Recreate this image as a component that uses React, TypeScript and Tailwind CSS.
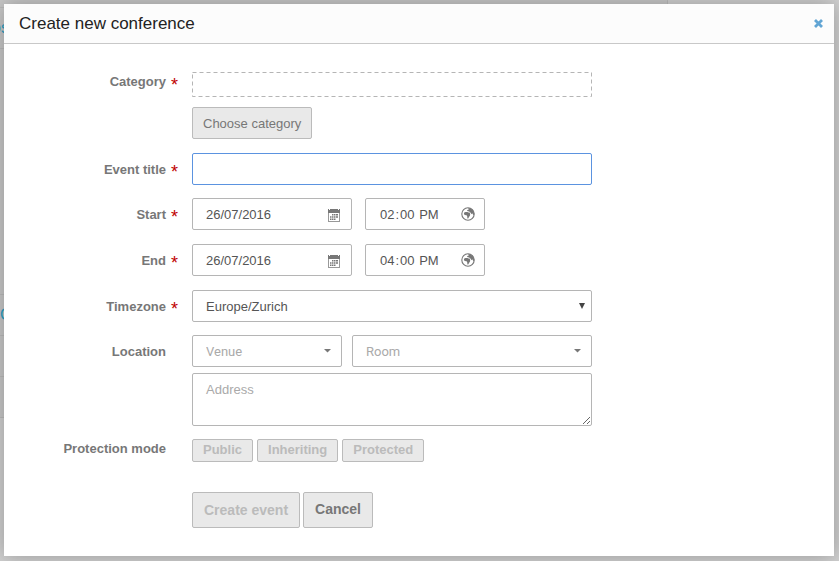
import { useState } from "react";
import type { ReactNode } from "react";

const field =
  "h-8 w-full rounded-xs border border-[#b5b5b5] bg-white px-[13px] text-[13px] text-[#555] outline-none";
const button =
  "rounded-xs border border-[#bbb] bg-[#e9e9e9] text-[#777] disabled:text-[#bbb]";

function CalendarIcon() {
  return (
    <svg width="12" height="13" viewBox="0 0 12 13" fill="#777" aria-hidden="true">
      <path d="M0 0h1v1h1V0h8v1h1V0h1v4H0z" />
      <path d="M0 4h1v8h10V4h1v9H0z" fillOpacity="0.75" />
      <path d="M4 5h1.5v1.5H4zM6 5h1.5v1.5H6zM8 5h2v1.5H8zM2 7.3h1.5v1.5H2zM4 7.3h1.5v1.5H4zM6 7.3h1.5v1.5H6zM8 7.3h2v1.5H8zM2 9.6h1.5V11H2zM4 9.6h1.5V11H4zM6 9.6h1.5V11H6z" />
    </svg>
  );
}

function GlobeIcon() {
  return (
    <svg width="14" height="14" viewBox="0 0 14 14" aria-hidden="true">
      <circle cx="7" cy="7" r="6.2" fill="none" stroke="#777" strokeWidth="1.1" />
      <path
        fill="#777"
        d="M3.2 5.6L4.6 4.9 6.4 5.1 7.5 5.6 8.7 5.6 9.2 7.3 9 8.6 8 10 7.2 11.6 6.4 11.4 6.2 9.3 5.6 8.3 3.8 8.1 2.9 7z"
      />
      <path
        fill="#777"
        d="M7.2 1L9.5 1.2 12 3.2 13.2 6 13 8.6 12 7.6 11.2 6.3 10.5 7.3 9.4 5.4 8.6 4.7 7.2 4.2 6 4.1 6.4 3 7.8 2.4z"
      />
    </svg>
  );
}

function Row({
  label,
  htmlFor,
  required,
  short,
  children,
}: {
  label: string;
  htmlFor?: string;
  required?: boolean;
  short?: boolean;
  children: ReactNode;
}) {
  return (
    <div className="grid grid-cols-[162px_26px_minmax(0,400px)]">
      <label
        htmlFor={htmlFor}
        className={`${short ? "h-5" : "h-8 pt-0.5"} flex items-center justify-end text-[13px] font-bold text-[#777]`}
      >
        {label}
      </label>
      <span
        className={`${short ? "h-5" : "h-8"} flex items-center pt-1.5 pl-[5px] text-lg leading-none text-[#c00000]`}
      >
        {required ? "*" : ""}
      </span>
      <div>{children}</div>
    </div>
  );
}

function DateTimeRow({ label, id, time }: { label: string; id: string; time: string }) {
  return (
    <Row label={label} htmlFor={id} required>
      <div className="flex gap-[13px]">
        <div className="relative w-40">
          <input id={id} type="text" defaultValue="26/07/2016" className={field} />
          <span className="pointer-events-none absolute top-[11px] right-3">
            <CalendarIcon />
          </span>
        </div>
        <div className="relative w-[120px]">
          <input
            type="time"
            aria-label={`${label} time`}
            defaultValue={time}
            className={`${field} pt-0.5 [&::-webkit-calendar-picker-indicator]:hidden`}
          />
          <span className="pointer-events-none absolute top-[9px] right-2.5">
            <GlobeIcon />
          </span>
        </div>
      </div>
    </Row>
  );
}

function Combo({ name, className }: { name: string; className: string }) {
  return (
    <div className={`relative ${className}`}>
      <select
        aria-label={name}
        className="h-8 w-full appearance-none rounded-xs border border-[#b5b5b5] bg-white px-[13px] pt-0.5 font-[Roboto,sans-serif] text-[13px] text-[#aaa] outline-none"
      >
        <option>{name}</option>
      </select>
      <svg
        width="7"
        height="4"
        viewBox="0 0 7 4"
        className="pointer-events-none absolute top-[14px] right-[11px]"
        aria-hidden="true"
      >
        <path d="M0 0h7L3.5 3.5z" fill="#777" />
      </svg>
    </div>
  );
}

export default function App() {
  const [title, setTitle] = useState("");
  return (
    <div className="relative flex min-h-screen flex-col overflow-hidden bg-[#d0d0d0] pt-1 pr-[5px] pb-[5px] pl-1 font-['Liberation_Sans',Arial,sans-serif]">
      <div className="absolute top-0 left-0 h-[418px] w-[668px] border-r border-b border-[#bbb] bg-[#c8c8c8] text-base text-[#2a9fc5]">
        <span className="absolute top-4 -left-2">os</span>
        <span className="absolute top-[303px] left-0">C</span>
        <div className="absolute top-[7px] h-[42px] w-full border-y border-[#bbb]" />
        <div className="absolute top-[294px] h-[42px] w-full border-y border-[#bbb]" />
        <div className="absolute top-[376px] w-full border-t border-[#bbb]" />
      </div>

      <section
        role="dialog"
        aria-labelledby="dialog-title"
        className="relative flex-1 bg-white shadow-[0_0_20px_rgba(0,0,0,0.28)]"
      >
        <header className="flex h-10 items-center justify-between border-b border-[#c8c8c8] bg-[#fcfcfc] pr-[11px] pl-[15px]">
          <h1 id="dialog-title" className="text-[17px] text-[#222]">
            Create new conference
          </h1>
          <button type="button" aria-label="Close">
            <svg width="9" height="9" viewBox="0 0 9 9" aria-hidden="true">
              <path d="M1 1l7 7M8 1L1 8" stroke="#62a5d4" strokeWidth="2.8" />
            </svg>
          </button>
        </header>

        <form
          onSubmit={(event) => event.preventDefault()}
          className="flex flex-col gap-[13px] pt-7 pb-7"
        >
          <div className="flex flex-col gap-3.5">
            <Row label="Category" htmlFor="category" required short>
              <div className="flex flex-col items-start gap-2.5">
                <svg width="100%" height="25" aria-hidden="true">
                  <rect
                    x="0.5"
                    y="0.5"
                    width="399"
                    height="24"
                    fill="none"
                    stroke="#b5b5b5"
                    strokeDasharray="4 3"
                  />
                </svg>
                <button id="category" type="button" className={`${button} h-8 px-2.5 pt-0.5 text-[13px]`}>
                  Choose category
                </button>
              </div>
            </Row>
            <Row label="Event title" htmlFor="title" required>
              <input
                id="title"
                type="text"
                value={title}
                onChange={(event) => setTitle(event.target.value)}
                className="h-8 w-full rounded-xs border border-[#5b93e0] px-[13px] text-[13px] text-[#555] outline-none"
              />
            </Row>
          </div>

          <div className="flex flex-col gap-3.5">
            <DateTimeRow label="Start" id="start" time="14:00" />
            <DateTimeRow label="End" id="end" time="16:00" />
            <Row label="Timezone" htmlFor="timezone" required>
              <div className="relative">
                <select id="timezone" className={`${field} appearance-none pt-0.5`}>
                  <option>Europe/Zurich</option>
                </select>
                <svg
                  width="6"
                  height="6"
                  viewBox="0 0 6 6"
                  className="pointer-events-none absolute top-[13px] right-[7px]"
                  aria-hidden="true"
                >
                  <path d="M0 0h6L3 6z" fill="#444" />
                </svg>
              </div>
            </Row>
          </div>

          <Row label="Location" htmlFor="address">
            <div className="flex gap-2.5">
              <Combo name="Venue" className="w-[150px]" />
              <Combo name="Room" className="flex-1" />
            </div>
            <textarea
              id="address"
              placeholder="Address"
              className="mt-1.5 block h-[53px] w-full rounded-xs border border-[#b5b5b5] px-[13px] py-1.5 text-[13px] text-[#555] outline-none placeholder:text-[#aaa]"
            />
          </Row>

          <Row label="Protection mode" short>
            <div className="flex gap-1">
              {["Public", "Inheriting", "Protected"].map((mode) => (
                <button
                  key={mode}
                  type="button"
                  disabled
                  className={`${button} h-[23px] px-2.5 pb-0.5 text-[13px] leading-5 font-bold`}
                >
                  {mode}
                </button>
              ))}
            </div>
          </Row>

          <div className="mt-[17px] flex gap-[3px] pl-[188px] text-sm font-bold">
            <button type="submit" disabled className={`${button} h-9 px-[11px]`}>
              Create event
            </button>
            <button type="button" className={`${button} h-9 px-[11px] pb-0.5`}>
              Cancel
            </button>
          </div>
        </form>
      </section>
    </div>
  );
}
